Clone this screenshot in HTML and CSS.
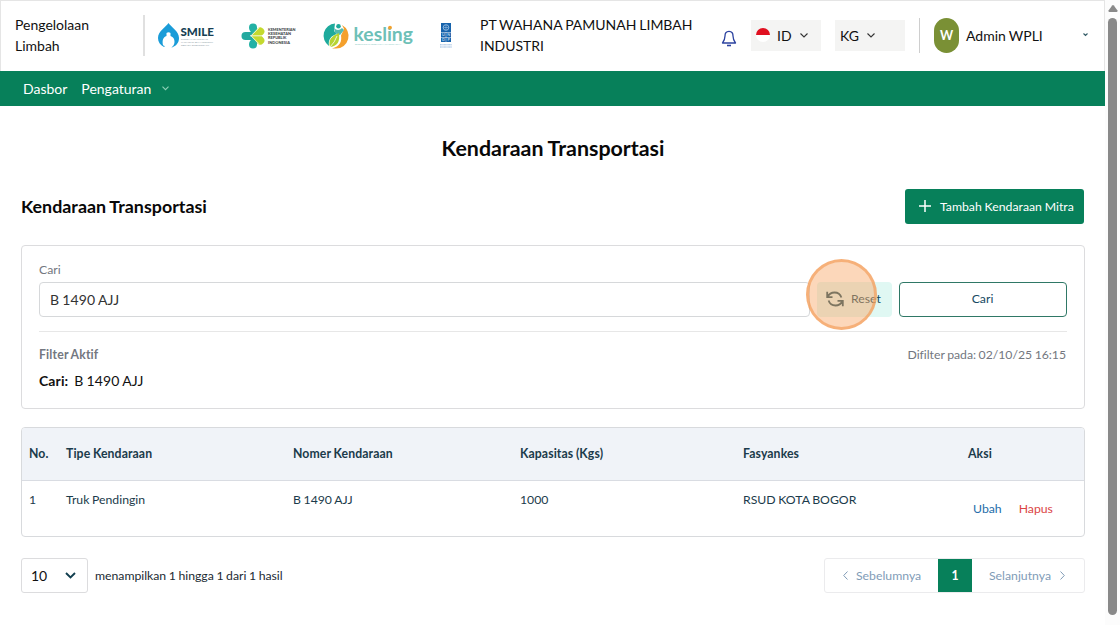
FILE: index.html
```html
<!DOCTYPE html>
<html lang="id">
<head>
<meta charset="utf-8">
<title>Kendaraan Transportasi</title>
<link rel="stylesheet" href="styles.css">
</head>
<body>
<div class="window">
<div class="app">
  <header class="header">
    <div class="product">Pengelolaan Limbah</div>
    <div class="logos">
      <svg class="logo-smile" width="56" height="26" viewBox="0 0 56 26">
        <path d="M10.500 0C13 4 21 8 21 15c0 5-3 8-7 9.500L10 22H8L6 24C2 22 0 19 0 15 0 8 8 4 10.500 0Z" fill="#1a9cd8"/>
        <path d="M8.500 10q2-1.500 4 0v3c3 1 4 3 4 6s-2 5-4 6l-2-.5-.5-2-3 .8-2-1c-1-5 0-8 3.500-9.300Z" fill="#fff"/>
        <text x="22.500" y="12.800" font-size="11" font-weight="900" fill="#173f54" textLength="33.500" lengthAdjust="spacingAndGlyphs">SMILE</text>
        <g font-size="2.600" fill="#8999a2"><text x="23" y="17.300" textLength="27" lengthAdjust="spacingAndGlyphs">SISTEM MONITORING</text><text x="23" y="20" textLength="32" lengthAdjust="spacingAndGlyphs">IMUNISASI DAN LOGISTIK</text><text x="23" y="22.600" textLength="28" lengthAdjust="spacingAndGlyphs">SECARA ELEKTRONIK</text></g>
      </svg>
      <svg class="logo-kemenkes" width="56" height="26" viewBox="0 0 56 26">
        <path d="M16 12V4.500a4 4 0 0 0-8 0C8 7 9 8 10 9v8c-1 1-2 2-2 4.500a4 4 0 0 0 8 0Z" fill="#23b1a5"/>
        <path d="M4.500 9H11v8H4.500a4 4 0 0 1 0-8Z" fill="#23a99f"/>
        <path d="M10 12.800 16.500 5.500a3.800 3.800 0 0 1 5.500 6L20.500 12.800 22 14.500a3.800 3.800 0 0 1-5.500 6Z" fill="#c4d92e"/>
        <path d="M9 12.800h14M10 12.800l8 8M10 12.800l8-8" stroke="#fff" stroke-width=".8"/>
        <g font-size="4.100" font-weight="900" fill="#42464a"><text x="27" y="7.600" textLength="27.500" lengthAdjust="spacingAndGlyphs">KEMENTERIAN</text><text x="27" y="12" textLength="23" lengthAdjust="spacingAndGlyphs">KESEHATAN</text><text x="27" y="16.400" textLength="18.500" lengthAdjust="spacingAndGlyphs">REPUBLIK</text><text x="27" y="20.800" textLength="22" lengthAdjust="spacingAndGlyphs">INDONESIA</text></g>
      </svg>
      <svg class="logo-kesling" width="90" height="26" viewBox="0 0 90 26">
        <path d="M11 .5A12.300 12.300 0 0 0 5 23C4 16 7 13 13 11L10 8Z" fill="#1eaa9c"/>
        <path d="M18 2A12.500 12.500 0 0 1 12 25.500H8c8-2 10-7 9-13L20 6Z" fill="#f4a02c"/>
        <circle cx="14.500" cy="3.200" r="2.300" fill="#1eaa9c"/>
        <path d="M10 5q4 4 8 0l2 2-4 5-5-2Z" fill="#53baae"/>
        <path d="M6 24C4 16 8 13 15 10c1 8-1 13-9 14Z" fill="#b7d331"/>
        <path d="M6 24q5-5 7-11" fill="none" stroke="#fff" stroke-width=".8"/>
        <text x="29.500" y="17.700" font-size="19.500" font-weight="700" fill="#6dc0b7" textLength="59.500" lengthAdjust="spacingAndGlyphs">kesling</text>
        <circle cx="66" cy="4.600" r="1.900" fill="#f4a02c"/>
        <text x="31" y="22.400" font-size="2.500" fill="#8bcac5" textLength="46" lengthAdjust="spacingAndGlyphs">DIREKTORAT KESEHATAN LINGKUNGAN</text>
      </svg>
      <svg class="logo-undp" width="12" height="26" viewBox="0 0 12 26">
        <path d="M1 0h10v9H1zM1 9.500h4.800V14H1zM6.200 9.500H11V14H6.200zM1 14.400h4.800V19H1zM6.200 14.400H11V19H6.200z" fill="#1763ac"/>
        <circle cx="6" cy="4.500" r="2.800" fill="none" stroke="#a9cae8" stroke-width=".8"/><path d="M3.500 4.500h5M6 2v5" stroke="#a9cae8" stroke-width=".5"/>
        <g font-size="3.800" font-weight="700" fill="#b9d3ea"><text x="2" y="13.200">U</text><text x="7.300" y="13.200">N</text><text x="2" y="18.200">D</text><text x="7.500" y="18.200">P</text></g>
        <path d="M0 21.800h12M0 24h12" stroke="#7aa5d4" stroke-width=".8" stroke-dasharray="1 .3"/>
      </svg>
    </div>
    <div class="company">PT WAHANA PAMUNAH LIMBAH INDUSTRI</div>
    <svg class="bell" width="16" height="17" viewBox="0 0 16 17" fill="none" stroke="#2c43a0" stroke-width="1.300" stroke-linejoin="round"><path d="M8 1.300C5 1.300 4 3.500 4 6c0 3-.6 4.500-2.500 7h13C12.600 10.500 12 9 12 6c0-2.500-1-4.700-4-4.700Z"/><path d="M6 15.500h4" stroke-width="1.600"/></svg>
    <div class="pick"><svg width="14" height="14" viewBox="0 0 14 14"><path d="M0 7a7 7 0 0 1 14 0Z" fill="#e01020"/><path d="M0 7a7 7 0 0 0 14 0Z" fill="#fff"/></svg><span class="lang">ID</span><svg class="pick-arrow" width="8" height="5" viewBox="0 0 8 5"><path d="m.5.5 3.500 3.500L7.500.5" fill="none" stroke="#333" stroke-width="1.100"/></svg></div>
    <div class="pick pick-unit"><span>KG</span><svg class="pick-arrow" width="8" height="5" viewBox="0 0 8 5"><path d="m.5.5 3.500 3.500L7.500.5" fill="none" stroke="#333" stroke-width="1.100"/></svg></div>
    <div class="user"><span class="avatar">W</span><span>Admin WPLI</span><svg class="user-arrow" width="5" height="4" viewBox="0 0 5 4"><path d="m.5.5 2 2 2-2" fill="none" stroke="#315a65" stroke-width="1.100"/></svg></div>
  </header>
  <nav class="nav"><span>Dasbor</span><span>Pengaturan</span><svg width="7" height="5" viewBox="0 0 7 5"><path d="m.5.700 3 3 3-3" fill="none" stroke="#8fd0b8" stroke-width="1.100"/></svg></nav>
  <main class="main">
    <h1 class="title">Kendaraan Transportasi</h1>
    <div class="section-head">
      <h2 class="subtitle">Kendaraan Transportasi</h2>
      <button class="btn-add"><svg width="12" height="12" viewBox="0 0 12 12"><path d="M6 0v12M0 6h12" stroke="#fff" stroke-width="1.500"/></svg><span>Tambah Kendaraan Mitra</span></button>
    </div>
    <section class="filter">
      <div class="label">Cari</div>
      <div class="search">
        <div class="input">B 1490 AJJ</div>
        <button class="btn-reset"><svg width="18" height="16" viewBox="0 0 18 16" fill="none" stroke="#164a59" stroke-width="1.800"><path d="M1.200.8v5.400h5.300M1.500 6C3 3 5.500 1.500 8.500 1.500c3.500 0 6 2.200 6.900 5M16.800 15.200V9.800h-5.300M16.500 10C15 13 12.500 14.500 9.500 14.500c-3.500 0-6-2.200-6.900-5"/></svg><span>Reset</span><i class="click-mark"></i></button>
        <button class="btn-search">Cari</button>
      </div>
      <div class="applied"><b>Filter Aktif</b><span class="stamp">Difilter pada: 02/10/25 16:15</span></div>
      <div class="term"><b>Cari:</b><span>B 1490 AJJ</span></div>
    </section>
    <section class="table">
      <div class="row head"><span>No.</span><span>Tipe Kendaraan</span><span>Nomer Kendaraan</span><span>Kapasitas (Kgs)</span><span>Fasyankes</span><span>Aksi</span></div>
      <div class="row"><span>1</span><span>Truk Pendingin</span><span>B 1490 AJJ</span><span>1000</span><span>RSUD KOTA BOGOR</span><span class="actions"><a class="edit">Ubah</a><a class="delete">Hapus</a></span></div>
    </section>
    <footer class="footer">
      <div class="size"><span>10</span><svg width="11" height="7" viewBox="0 0 11 7"><path d="m1 1 4.500 4.500L10 1" fill="none" stroke="#123f4f" stroke-width="1.900"/></svg></div>
      <span class="summary">menampilkan 1 hingga 1 dari 1 hasil</span>
      <div class="pager">
        <span class="prev"><svg width="5" height="9" viewBox="0 0 5 9"><path d="M4.500.5.700 4.500l3.800 4" fill="none" stroke="#819cb7"/></svg><span>Sebelumnya</span></span>
        <b class="current">1</b>
        <span class="next"><span>Selanjutnya</span><svg width="5" height="9" viewBox="0 0 5 9"><path d="m.5.5 3.800 4-3.800 4" fill="none" stroke="#819cb7"/></svg></span>
      </div>
    </footer>
  </main>
</div>
<aside class="scrollbar"><svg width="10" height="7" viewBox="0 0 10 7"><path d="M4.200.5q.8-.8 1.600 0L9.500 5.500q.3 1.500-1 1.500h-7q-1.300 0-1-1.500Z" fill="#898989"/></svg><div class="thumb"></div></aside>
</div>
</body>
</html>
```
FILE: styles.css
```css
* { box-sizing: border-box; }
body { margin: 0; font-family: Lato, "Liberation Sans", sans-serif; font-size: 14px; line-height: 21px; word-spacing: -.5px; color: #111; background: #fff; }
button { font: inherit; border: 0; padding: 0; word-spacing: -.3px; }
svg { flex: none; overflow: visible; word-spacing: 0; }
.window { display: flex; width: 1120px; height: 625px; overflow: hidden; }
.app { width: 1105px; flex: none; }
.scrollbar { flex: 1; display: flex; flex-direction: column; align-items: center; padding: 5px 0 0; background: #fcfcfc; }
.thumb { width: 9px; height: 597px; margin-top: 6px; border-radius: 5px; background: #898989; }

.header { height: 71px; display: flex; align-items: center; padding-bottom: 2px; border: 1px solid #e5e5e5; border-bottom: 0; }
.product { width: 142px; padding-left: 14px; padding-right: 43px; }
.logos { height: 41px; display: flex; align-items: center; padding: 1px 0 0 13px; border-left: 2px solid #e0e0e0; }
.logo-kemenkes { margin-left: 27px; }
.logo-kesling { margin-left: 27px; }
.logo-undp { margin-left: 26px; }
.company { width: 222px; margin-left: 28px; letter-spacing: -.03px; }
.bell { margin: 6px 0 0 19px; }
.pick { width: 70px; height: 31px; margin-left: 14px; padding-left: 5px; display: flex; align-items: center; background: #f4f4f3; }
.lang { margin-left: 7px; }
.pick-arrow { margin-left: 8px; }
.user { flex: 1; height: 35px; margin-left: 14px; padding: 0 16px 0 14px; display: flex; align-items: center; border-left: 1px solid #cecece; }
.avatar { width: 25px; height: 35px; margin-right: 7px; border-radius: 13px; background: #7a9035; color: #fff; line-height: 35px; text-align: center; font-size: 12.500px; font-weight: 700; }
.user-arrow { margin-left: auto; }
.nav { height: 35px; padding: 0 0 1px 23px; display: flex; align-items: center; gap: 14px; color: #fff; background: #07805a; }
.nav svg { margin: 1px 0 0 -3px; }

.main { padding: 31px 20px 0 21px; }
.title { margin: 0; text-align: center; font-size: 21.400px; line-height: 22px; color: #080808; }
.section-head { margin-top: 30px; height: 34px; display: flex; align-items: center; justify-content: space-between; }
.subtitle { margin: 0; font-size: 17.850px; color: #080808; }
.btn-add { width: 179px; height: 35px; margin-right: 1px; display: flex; align-items: center; padding-left: 14px; gap: 9px; border-radius: 3px; color: #fff; background: #07805a; font-size: 12.250px; }
.filter { margin-top: 22px; height: 164px; padding: 13px 17px 0; border: 1px solid #dcdcde; border-radius: 4px; }
.label { margin-bottom: 2px; font-size: 12.250px; color: #737780; }
.search { display: flex; gap: 7px; padding-bottom: 14px; border-bottom: 1px solid #e7e7e7; }
.input { flex: 1; height: 35px; padding: 0 10px; border: 1px solid #d6d8da; border-radius: 4px; line-height: 34px; letter-spacing: .1px; color: #333; }
.btn-reset { position: relative; width: 75px; height: 35px; display: flex; align-items: center; padding: 0 0 2px 9px; gap: 7px; border-radius: 4px; color: #164a59; background: #e0f8f3; font-size: 12.250px; }
.click-mark { position: absolute; left: -11px; top: -23px; width: 71px; height: 71px; border: 3px solid rgba(242, 155, 88, .65); border-radius: 50%; background: rgba(249, 168, 105, .46); }
.btn-search { width: 168px; height: 35px; padding: 0 1px 2px 0; border: 1px solid #2f7866; border-radius: 4px; background: #fff; color: #164a63; font-size: 12.250px; }
.applied { display: flex; justify-content: space-between; margin-top: 12px; font-size: 12.250px; color: #737780; }
.applied b { letter-spacing: .15px; }
.stamp { letter-spacing: -.03px; padding-right: 1px; }
.term { display: flex; gap: 6px; margin-top: 5px; letter-spacing: .1px; }

.table { margin-top: 18px; height: 110px; border: 1px solid #d8dadd; border-radius: 4px; overflow: hidden; font-size: 12.250px; color: #1b3b4b; }
.row { display: grid; grid-template-columns: 37px 227px 227px 223px 225px 1fr; padding: 8px 0 0 7px; }
.head { height: 53px; padding-top: 0; padding-bottom: 1px; align-items: center; background: #f0f3f8; border-bottom: 1px solid #d9dce2; font-weight: 700; letter-spacing: .1px; }
.actions { display: flex; gap: 17px; padding: 9px 0 0 5px; }
.edit { color: #246da9; }
.delete { color: #db4545; }
.footer { margin-top: 21px; display: flex; align-items: center; font-size: 12.250px; }
.size { width: 67px; height: 35px; display: flex; align-items: center; justify-content: space-between; padding: 0 11px 1px 9px; border: 1px solid #dcdcde; border-radius: 3px; font-size: 14px; }
.summary { margin-left: 7px; color: #222b33; letter-spacing: -.02px; }
.pager { width: 261px; height: 35px; margin-left: auto; margin-right: 0; display: flex; border: 1px solid #ebebed; border-radius: 3px; color: #819cb7; line-height: 33px; }
.prev { width: 113px; display: flex; align-items: center; padding-left: 18px; gap: 8px; }
.current { width: 34px; text-align: center; color: #fff; background: #07805a; }
.next { flex: 1; display: flex; align-items: center; justify-content: flex-end; padding-right: 19px; gap: 9px; }
```
